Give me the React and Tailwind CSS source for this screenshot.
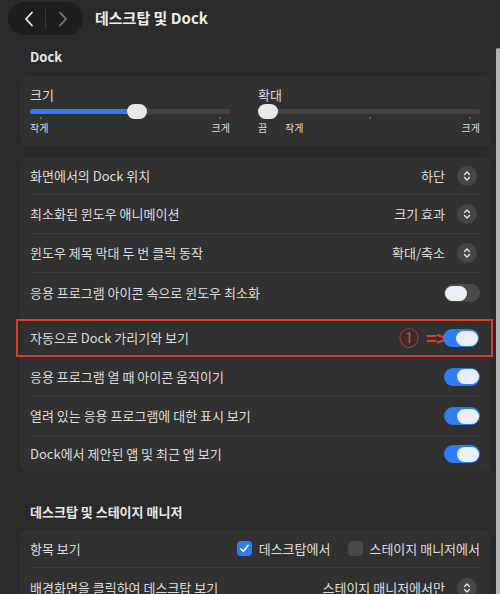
import { useState } from "react";

const font = {
  fontFamily:
    '"Noto Sans CJK KR", "Noto Sans", "Liberation Sans", sans-serif',
};

function Stepper() {
  return (
    <span className="flex items-center justify-center w-[20px] h-[20px] rounded-full bg-[#464646] ml-[12px] mr-[3px]">
      <svg width="8" height="12" viewBox="0 0 8 12" fill="none">
        <polyline points="1.5,4.5 4,2 6.5,4.5" stroke="#e6e6e6" strokeWidth="1.4" strokeLinecap="round" strokeLinejoin="round" />
        <polyline points="1.5,7.5 4,10 6.5,7.5" stroke="#e6e6e6" strokeWidth="1.4" strokeLinecap="round" strokeLinejoin="round" />
      </svg>
    </span>
  );
}

function Toggle({ on }) {
  return (
    <span
      className={`flex items-center w-[36px] h-[18px] rounded-full px-[1px] ${
        on ? "bg-[#2f7cf6] justify-end" : "bg-[#4a4a4a] justify-start"
      }`}
    >
      <span className="w-[22px] h-[15px] rounded-full bg-[#e9eef8]" />
    </span>
  );
}

function Checkbox({ checked }) {
  return checked ? (
    <span className="flex items-center justify-center w-[15px] h-[15px] rounded-[4px] bg-[#2f7cf6]">
      <svg width="11" height="11" viewBox="0 0 11 11" fill="none">
        <polyline points="2,5.8 4.4,8.3 9,2.5" stroke="#fff" strokeWidth="1.7" strokeLinecap="round" strokeLinejoin="round" />
      </svg>
    </span>
  ) : (
    <span className="block w-[15px] h-[15px] rounded-[4px] bg-[#4a4a4a]" />
  );
}

function Row({ label, children, h = "h-[39px]", border = true }) {
  return (
    <div
      className={`flex items-center justify-between mx-[10px] ${h} ${
        border ? "border-b border-[#3b3b3b]" : ""
      }`}
    >
      <span className="text-[13px] text-[#dedede]">{label}</span>
      <div className="flex items-center">{children}</div>
    </div>
  );
}

function Slider({ label, pct, ticks, labels }) {
  return (
    <div className="flex flex-col pt-[11px]">
      <span className="text-[13px] leading-[16px] text-[#dedede]">{label}</span>
      <div className="relative h-[16px]">
        <div className="absolute left-0 right-0 top-[6px] h-[5px] rounded-full bg-[#444444]" />
        <div
          className="absolute left-0 top-[6px] h-[5px] rounded-full bg-[#2f7cf6]"
          style={{ width: `${pct}%` }}
        />
        {ticks.map((t) => (
          <div
            key={t}
            className="absolute top-[14px] w-[2px] h-[2px] rounded-full bg-[#7a7a7a]"
            style={{ left: `${t}%` }}
          />
        ))}
        <div
          className="absolute top-[1px] w-[20px] h-[15px] rounded-full bg-[#e8e8e8] -translate-x-1/2"
          style={{ left: `calc(${pct}% + ${pct === 0 ? 10 : 0}px)` }}
        />
      </div>
      <div className="relative h-[14px] mt-[2px] text-[10px] leading-[14px] text-[#dedede]">
        {labels.map(([text, left, right]) => (
          <span
            key={text + left}
            className="absolute top-0"
            style={right ? { right: 0 } : { left }}
          >
            {text}
          </span>
        ))}
      </div>
    </div>
  );
}

export default function App() {
  const [rows] = useState([
    { label: "응용 프로그램 열 때 아이콘 움직이기", h: "h-[40px]" },
    { label: "열려 있는 응용 프로그램에 대한 표시 보기", h: "h-[39px]" },
    { label: "Dock에서 제안된 앱 및 최근 앱 보기", h: "h-[36px]", border: false },
  ]);

  return (
    <div className="w-[500px] h-[594px] overflow-hidden bg-[#2a2a2a] flex" style={font}>
      <div className="w-[496px] shrink-0">
        <header className="flex items-center h-[37px] pl-[8px]">
          <div className="flex items-center w-[75px] h-[33px] rounded-full bg-[#1d1d1d]">
            <div className="flex-1 flex justify-center pl-[4px]">
              <svg width="10" height="16" viewBox="0 0 10 16" fill="none">
                <polyline points="8,1.5 2,8 8,14.5" stroke="#f0f0f0" strokeWidth="1.8" strokeLinecap="round" strokeLinejoin="round" />
              </svg>
            </div>
            <div className="w-[1px] h-[20px] bg-[#3a3a3a]" />
            <div className="flex-1 flex justify-center pr-[4px]">
              <svg width="10" height="16" viewBox="0 0 10 16" fill="none">
                <polyline points="2,1.5 8,8 2,14.5" stroke="#7c7c7c" strokeWidth="1.8" strokeLinecap="round" strokeLinejoin="round" />
              </svg>
            </div>
          </div>
          <h1 className="ml-[12px] text-[15px] font-bold text-[#eeeeee]">데스크탑 및 Dock</h1>
        </header>

        <h2 className="ml-[30px] mt-[11px] text-[13px] leading-[18px] font-bold text-[#e6e6e6]">Dock</h2>

        <div className="ml-[20px] mt-[10px] w-[470px] h-[70px] rounded-[8px] bg-[#313131] px-[10px] flex gap-[28px]">
          <div className="w-[200px]">
            <Slider
              label="크기"
              pct={53.5}
              ticks={[5, 94.5]}
              labels={[
                ["작게", 0],
                ["크게", 0, true],
              ]}
            />
          </div>
          <div className="flex-1">
            <Slider
              label="확대"
              pct={0}
              ticks={[50, 95]}
              labels={[
                ["끔", 0],
                ["작게", 27],
                ["크게", 0, true],
              ]}
            />
          </div>
        </div>

        <div className="ml-[20px] mt-[11px] w-[470px] rounded-[8px] bg-[#313131] flex flex-col">
          <Row label="화면에서의 Dock 위치" h="h-[38px]">
            <span className="text-[13px] text-[#dedede]">하단</span>
            <Stepper />
          </Row>
          <Row label="최소화된 윈도우 애니메이션">
            <span className="text-[13px] text-[#dedede]">크기 효과</span>
            <Stepper />
          </Row>
          <Row label="윈도우 제목 막대 두 번 클릭 동작">
            <span className="text-[13px] text-[#dedede]">확대/축소</span>
            <Stepper />
          </Row>
          <Row label="응용 프로그램 아이콘 속으로 윈도우 최소화" h="h-[40px]" border={false}>
            <Toggle on={false} />
          </Row>

          <div className="ml-[-4px] mt-[6px] w-[477px] h-[38px] border-2 border-[#d8402a] flex items-center justify-between pl-[12px] pr-[12px]">
            <span className="text-[13px] text-[#dedede]">자동으로 Dock 가리기와 보기</span>
            <div className="flex items-center text-[#e0402a]">
              <span className="text-[20px] leading-[20px] mr-[7px]">①</span>
              <span
                className="text-[19px] leading-[19px] font-bold"
                style={{ fontFamily: '"Liberation Sans", sans-serif', fontVariantLigatures: "none" }}
              >
                =
              </span>
              <span
                className="text-[19px] leading-[19px] font-bold -ml-[1px] -mr-[4px]"
                style={{ fontFamily: '"Liberation Sans", sans-serif' }}
              >
                &gt;
              </span>
              <Toggle on />
            </div>
          </div>

          {rows.map((r) => (
            <Row key={r.label} label={r.label} h={r.h} border={r.border !== false}>
              <Toggle on />
            </Row>
          ))}
        </div>

        <h2 className="ml-[30px] mt-[31px] text-[13px] leading-[18px] font-bold text-[#e6e6e6]">
          데스크탑 및 스테이지 매니저
        </h2>

        <div className="ml-[20px] mt-[9px] w-[470px] rounded-[8px] bg-[#313131] flex flex-col">
          <Row label="항목 보기" h="h-[38px]">
            <Checkbox checked />
            <span className="ml-[7px] text-[13px] text-[#dedede]">데스크탑에서</span>
            <span className="ml-[18px]">
              <Checkbox checked={false} />
            </span>
            <span className="ml-[6px] text-[13px] text-[#dedede]">스테이지 매니저에서</span>
          </Row>
          <Row label="배경화면을 클릭하여 데스크탑 보기" border={false}>
            <span className="text-[13px] text-[#dedede]">스테이지 매니저에서만</span>
            <Stepper />
          </Row>
        </div>
      </div>
      <div className="w-[4px] shrink-0 flex flex-col">
        <div className="mt-[48px] flex-1 rounded-t-full bg-[#b4b4b4]" />
      </div>
    </div>
  );
}
